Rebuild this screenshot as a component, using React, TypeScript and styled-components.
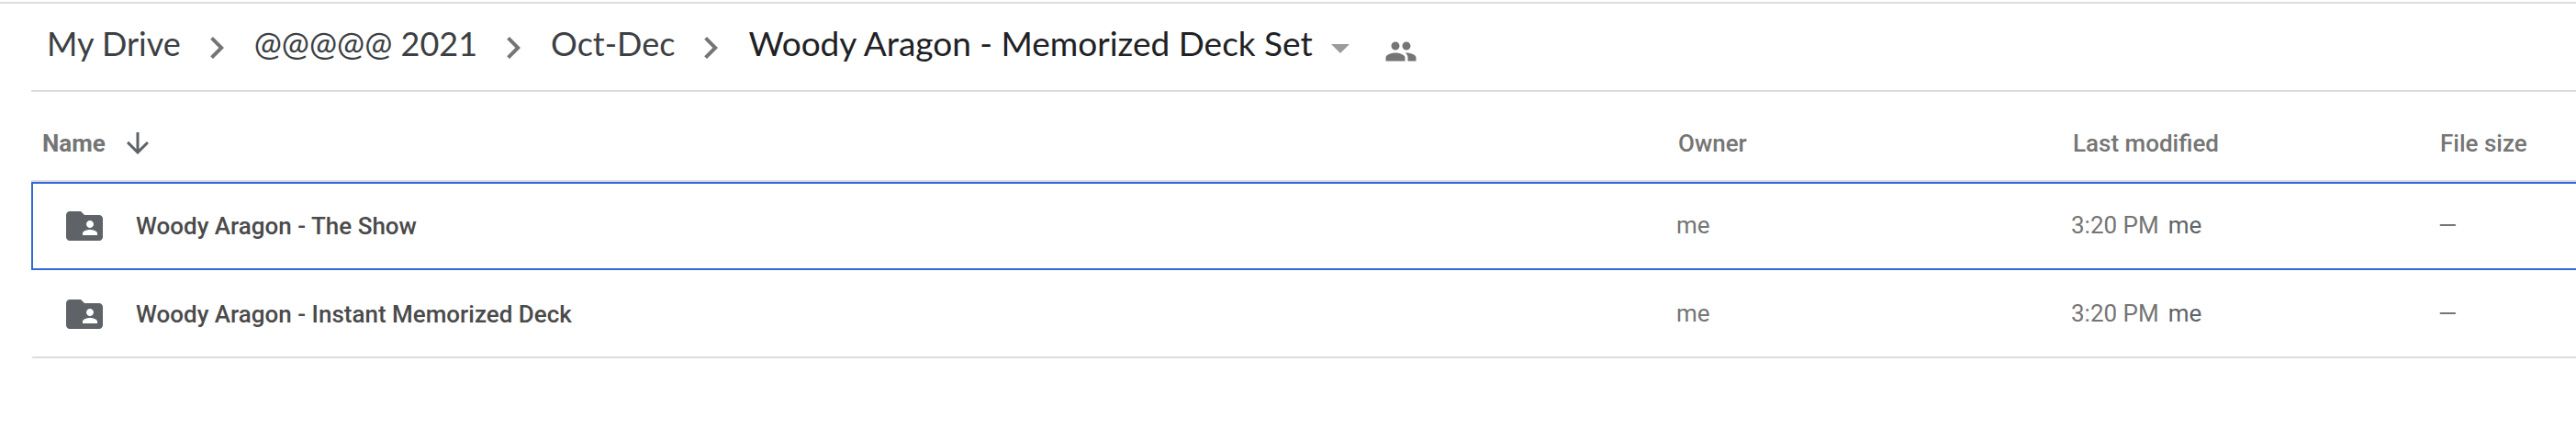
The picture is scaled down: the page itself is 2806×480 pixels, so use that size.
import React from 'react';
import styled, { createGlobalStyle, css } from 'styled-components';

const GlobalStyle = createGlobalStyle`
  *, *::before, *::after { box-sizing: border-box; }
  body {
    margin: 0;
    background: #fff;
    font-family: Roboto, "Liberation Sans", sans-serif;
    font-size: 26px;
    line-height: 32px;
  }
`;

const line = '#dadce0';
const focus = '#3367d6';

const Page = styled.div`
  padding-top: 2px;
`;

const Content = styled.main`
  border-top: 2px solid ${line};
  padding-left: 34px;
`;

const PathBar = styled.header`
  display: flex;
  align-items: center;
  padding: 22px 0 22px 17px;
  border-bottom: 2px solid ${line};
`;

const Crumbs = styled.ol`
  display: flex;
  align-items: center;
  margin: 0;
  padding: 0;
  list-style: none;
`;

const Crumb = styled.li`
  display: flex;
  align-items: center;
`;

const crumbText = css`
  padding: 0 0 8px;
  font-family: Lato, "Open Sans", sans-serif;
  line-height: 40px;
  white-space: nowrap;
`;

const CrumbLink = styled.a`
  ${crumbText}
  font-size: 36px;
  color: #3c4043;
  text-decoration: none;
`;

const FolderMenu = styled.button`
  display: flex;
  align-items: center;
  gap: 6px;
  padding: 0;
  border: 0;
  background: none;
  cursor: pointer;
`;

const FolderTitle = styled.span`
  ${crumbText}
  font-size: 37px;
  color: #202124;
`;

const ShareButton = styled.button`
  display: flex;
  margin-left: 24px;
  padding: 10px 0 0;
  border: 0;
  background: none;
  cursor: pointer;
`;

const Icon = styled.svg<{ $size: number; $color: string }>`
  flex: none;
  display: block;
  width: ${(p) => p.$size}px;
  height: ${(p) => p.$size}px;
  fill: ${(p) => p.$color};
`;

const Separator = styled(Icon)`
  margin: 2px 17px 0 15px;
`;

const FileTable = styled.table`
  width: 100%;
  table-layout: fixed;
  border-collapse: separate;
  border-spacing: 0;
`;

const Column = styled.col<{ $width?: number }>`
  width: ${(p) => (p.$width ? `${p.$width}px` : 'auto')};
`;

const Heading = styled.th<{ $main?: boolean }>`
  height: 98px;
  padding: 16px 0 0 ${(p) => (p.$main ? 12 : 2)}px;
  border-bottom: 2px solid ${line};
  text-align: left;
  font-weight: ${(p) => (p.$main ? 700 : 500)};
  color: #757575;
  white-space: nowrap;
`;

const SortButton = styled.button`
  display: flex;
  align-items: center;
  gap: 17px;
  padding: 0;
  border: 0;
  background: none;
  font: inherit;
  color: inherit;
  cursor: pointer;
`;

const Cell = styled.td`
  height: 96px;
  padding: 0 0 2px;
  color: #757575;
  white-space: nowrap;
`;

const NameCell = styled(Cell)`
  padding: 0 0 0 32px;
  border-left: 2px solid transparent;
  font-weight: 500;
  color: #4a4a4a;
`;

const Row = styled.tr<{ $focused?: boolean }>`
  ${Cell} {
    border-top: 2px solid ${(p) => (p.$focused ? focus : 'transparent')};
    border-bottom: 2px solid ${(p) => (p.$focused ? focus : line)};
  }
  ${NameCell} {
    border-left-color: ${(p) => (p.$focused ? focus : 'transparent')};
  }
`;

const FileName = styled.div`
  display: flex;
  align-items: center;
  gap: 32px;
`;

const Modifier = styled.span`
  margin-left: 10px;
  color: #5f6368;
`;

const path = ['My Drive', '@@@@@ 2021', 'Oct-Dec'];

const files = [
  { name: 'Woody Aragon - The Show', owner: 'me', time: '3:20 PM', by: 'me', size: '—' },
  { name: 'Woody Aragon - Instant Memorized Deck', owner: 'me', time: '3:20 PM', by: 'me', size: '—' },
];

export default function App() {
  return (
    <Page>
      <GlobalStyle />
      <Content>
        <PathBar>
          <nav aria-label="Folder path">
            <Crumbs>
              {path.map((name) => (
                <Crumb key={name}>
                  <CrumbLink href="#">{name}</CrumbLink>
                  <Separator $size={48} $color="#757575" viewBox="0 0 24 24" aria-hidden>
                    <path d="M8.59 16.59L13.17 12 8.59 7.41 10 6l6 6-6 6z" />
                  </Separator>
                </Crumb>
              ))}
              <Crumb>
                <FolderMenu aria-haspopup="menu">
                  <FolderTitle>Woody Aragon - Memorized Deck Set</FolderTitle>
                  <Icon $size={48} $color="#9a9b9c" viewBox="0 0 24 24" aria-hidden>
                    <path d="M7 10.5l5 5 5-5z" />
                  </Icon>
                </FolderMenu>
              </Crumb>
            </Crumbs>
          </nav>
          <ShareButton aria-label="Manage people">
            <Icon $size={36} $color="#757575" viewBox="0 0 24 24" aria-hidden>
              <path d="M16 11c1.66 0 2.99-1.34 2.99-3S17.66 5 16 5s-3 1.34-3 3 1.34 3 3 3zm-8 0c1.66 0 2.99-1.34 2.99-3S9.66 5 8 5 5 6.34 5 8s1.34 3 3 3zm0 2c-2.33 0-7 1.17-7 3.5V19h14v-2.5c0-2.33-4.67-3.5-7-3.5zm8 0c-.29 0-.62.02-.97.05 1.16.84 1.97 1.97 1.97 3.45V19h6v-2.5c0-2.33-4.67-3.5-7-3.5z" />
            </Icon>
          </ShareButton>
        </PathBar>
        <FileTable>
          <colgroup>
            <Column />
            <Column $width={430} />
            <Column $width={400} />
            <Column $width={150} />
          </colgroup>
          <thead>
            <tr>
              <Heading $main scope="col" aria-sort="ascending">
                <SortButton>
                  Name
                  <Icon $size={36} $color="#5f6368" viewBox="0 0 24 24" aria-hidden>
                    <path d="M20 12l-1.41-1.41L13 16.17V4h-2v12.17l-5.58-5.59L4 12l8 8z" />
                  </Icon>
                </SortButton>
              </Heading>
              <Heading scope="col">Owner</Heading>
              <Heading scope="col">Last modified</Heading>
              <Heading scope="col">File size</Heading>
            </tr>
          </thead>
          <tbody>
            {files.map((file, index) => (
              <Row key={file.name} $focused={index === 0}>
                <NameCell>
                  <FileName>
                    <Icon $size={48} $color="#5f6368" viewBox="0 0 24 24" aria-hidden>
                      <path d="M20 6h-8l-2-2H4c-1.1 0-1.99.9-1.99 2L2 18c0 1.1.9 2 2 2h16c1.1 0 2-.9 2-2V8c0-1.1-.9-2-2-2zm-5 3c1.1 0 2 .9 2 2s-.9 2-2 2-2-.9-2-2 .9-2 2-2zm4 8h-8v-1c0-1.33 2.67-2 4-2s4 .67 4 2v1z" />
                    </Icon>
                    {file.name}
                  </FileName>
                </NameCell>
                <Cell>{file.owner}</Cell>
                <Cell>
                  {file.time}
                  <Modifier>{file.by}</Modifier>
                </Cell>
                <Cell>{file.size}</Cell>
              </Row>
            ))}
          </tbody>
        </FileTable>
      </Content>
    </Page>
  );
}
